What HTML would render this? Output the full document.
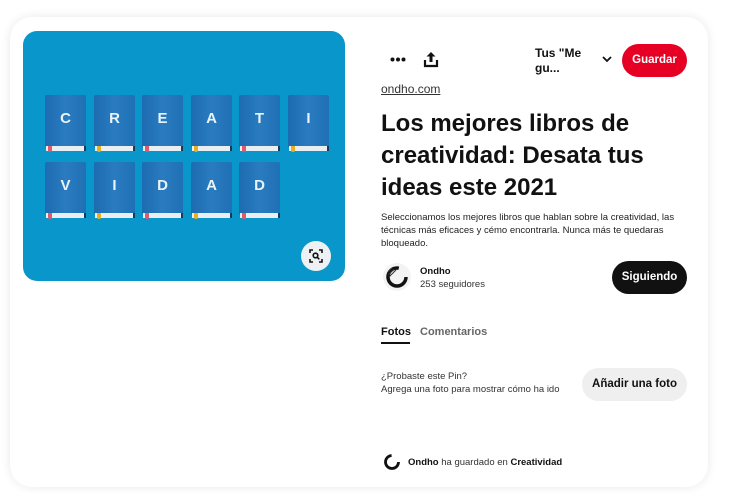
<!DOCTYPE html>
<html><head><meta charset="utf-8"><style>
*{margin:0;padding:0;box-sizing:border-box}
body{width:730px;height:494px;background:#fff;font-family:"Liberation Sans","DejaVu Sans",sans-serif;color:#111;position:relative;overflow:hidden}
.card{position:absolute;left:10px;top:17px;width:698px;height:470px;background:#fff;border-radius:22px;box-shadow:0 0 10px rgba(0,0,0,.09)}
.img{position:absolute;left:23px;top:31px;width:322px;height:250px;background:#0896cb;border-radius:14px;overflow:hidden}
.book{position:absolute;width:41px;height:57px}
.book .cv{position:absolute;left:0;top:0;width:41px;height:52px;background:linear-gradient(90deg,#1d6bb0,#2a7bc0 50%,#1f70b5);border-radius:2px 2px 0 0;color:#e8f4fb;font-weight:bold;font-size:15px;text-align:center;line-height:48px}
.book .pg{position:absolute;left:1px;top:51px;width:40px;height:5px;background:#e8eef2;border-right:2px solid #1b3a5a}
.book .bm{position:absolute;left:3px;top:51px;width:4px;height:6px;background:#e05a6a;border-radius:0 0 2px 2px}
.book .bm.y{background:#e8b020}
.abs{position:absolute}
.zoom{position:absolute;left:301px;top:241px;width:30px;height:30px;border-radius:50%;background:#eef1f3}
</style></head><body>
<div class="card"></div>
<div class="img">
 <div class="book" style="left:22px;top:64px"><div class="cv">C</div><div class="pg"></div><div class="bm"></div></div>
 <div class="book" style="left:71px;top:64px"><div class="cv">R</div><div class="pg"></div><div class="bm y"></div></div>
 <div class="book" style="left:119px;top:64px"><div class="cv">E</div><div class="pg"></div><div class="bm"></div></div>
 <div class="book" style="left:168px;top:64px"><div class="cv">A</div><div class="pg"></div><div class="bm y"></div></div>
 <div class="book" style="left:216px;top:64px"><div class="cv">T</div><div class="pg"></div><div class="bm"></div></div>
 <div class="book" style="left:265px;top:64px"><div class="cv">I</div><div class="pg"></div><div class="bm y"></div></div>
 <div class="book" style="left:22px;top:131px"><div class="cv">V</div><div class="pg"></div><div class="bm"></div></div>
 <div class="book" style="left:71px;top:131px"><div class="cv">I</div><div class="pg"></div><div class="bm y"></div></div>
 <div class="book" style="left:119px;top:131px"><div class="cv">D</div><div class="pg"></div><div class="bm"></div></div>
 <div class="book" style="left:168px;top:131px"><div class="cv">A</div><div class="pg"></div><div class="bm y"></div></div>
 <div class="book" style="left:216px;top:131px"><div class="cv">D</div><div class="pg"></div><div class="bm"></div></div>
</div>
<div class="zoom"><svg width="30" height="30" viewBox="0 0 30 30" fill="none" stroke="#111" stroke-width="1.6"><path d="M9 12V9h3M18 9h3v3M21 18v3h-3M12 21H9v-3"/><circle cx="14.5" cy="14.5" r="2.3"/><path d="M16.3 16.3l2 2"/></svg></div>

<svg class="abs" style="left:390px;top:57px" width="16" height="5" viewBox="0 0 16 5"><circle cx="2.5" cy="2.5" r="2" fill="#111"/><circle cx="8" cy="2.5" r="2" fill="#111"/><circle cx="13.5" cy="2.5" r="2" fill="#111"/></svg>
<svg class="abs" style="left:423px;top:51px" width="16" height="17" viewBox="0 0 16 17"><path d="M8 1L3.5 5.5h3V11h3V5.5h3z" fill="#111"/><path d="M2 9v6h12V9" stroke="#111" stroke-width="2.2" fill="none"/></svg>
<div class="abs" style="left:535px;top:46px;font-size:12px;font-weight:bold;line-height:15px">Tus "Me<br>gu...</div>
<svg class="abs" style="left:602px;top:55px" width="10" height="8" viewBox="0 0 10 8"><path d="M1 2l4 4 4-4" stroke="#111" stroke-width="1.8" fill="none"/></svg>
<div class="abs" style="left:622px;top:44px;width:65px;height:33px;border-radius:17px;background:#e60023;color:#fff;font-size:11.5px;font-weight:bold;text-align:center;line-height:33px">Guardar</div>

<div class="abs" style="left:381px;top:82px;font-size:12px;text-decoration:underline;color:#333">ondho.com</div>
<div class="abs" style="left:381px;top:108px;font-size:24px;font-weight:bold;line-height:32px;width:310px">Los mejores libros de creatividad: Desata tus ideas este 2021</div>
<div class="abs" style="left:381px;top:211px;font-size:9.5px;line-height:13px;width:310px;color:#222">Seleccionamos los mejores libros que hablan sobre la creatividad, las técnicas más eficaces y cémo encontrarla. Nunca más te quedaras bloqueado.</div>

<svg class="abs" style="left:382px;top:262px" width="30" height="30" viewBox="0 0 30 30"><circle cx="15" cy="15" r="14" fill="#f3f3f3"/><circle cx="15" cy="15" r="9" fill="none" stroke="#111" stroke-width="3.5" stroke-dasharray="44 13"/><path d="M6 10l4-4M6 13l6-6M7 15l7-7" stroke="#333" stroke-width="1"/></svg>
<div class="abs" style="left:420px;top:266px;font-size:9.5px;font-weight:bold">Ondho</div>
<div class="abs" style="left:420px;top:279px;font-size:9.5px;color:#333">253 seguidores</div>
<div class="abs" style="left:612px;top:261px;width:75px;height:33px;border-radius:17px;background:#111;color:#fff;font-size:11.5px;font-weight:bold;text-align:center;line-height:33px">Siguiendo</div>

<div class="abs" style="left:381px;top:326px;font-size:11px;font-weight:bold">Fotos</div>
<div class="abs" style="left:381px;top:342px;width:29px;height:2px;background:#111"></div>
<div class="abs" style="left:420px;top:326px;font-size:11px;font-weight:bold;color:#666">Comentarios</div>

<div class="abs" style="left:381px;top:370px;font-size:9.5px;line-height:13px;color:#333">¿Probaste este Pin?<br>Agrega una foto para mostrar cómo ha ido</div>
<div class="abs" style="left:582px;top:368px;width:105px;height:33px;border-radius:17px;background:#efefef;font-size:11.5px;font-weight:bold;text-align:center;line-height:33px">Añadir una foto</div>

<svg class="abs" style="left:382px;top:452px" width="20" height="20" viewBox="0 0 20 20"><circle cx="10" cy="10" r="6.5" fill="none" stroke="#111" stroke-width="2.8" stroke-dasharray="30 11"/></svg>
<div class="abs" style="left:408px;top:457px;font-size:9.5px;color:#333"><b style="color:#111">Ondho</b> ha guardado en <b style="color:#111">Creatividad</b></div>
</body></html>
